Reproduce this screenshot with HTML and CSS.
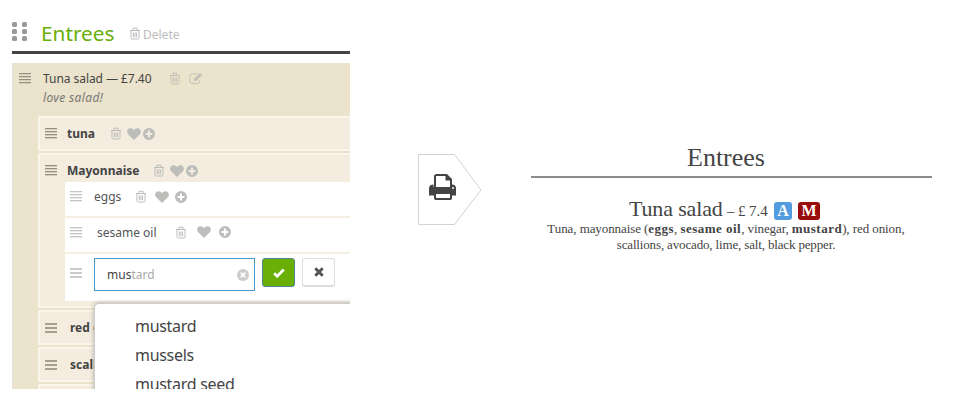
FILE: index.html
```html
<!DOCTYPE html>
<html lang="en">
<head>
<meta charset="utf-8">
<title>Menu editor</title>
<link rel="stylesheet" href="styles.css">
</head>
<body>
<svg class="defs" width="0" height="0" aria-hidden="true">
  <symbol id="trash" viewBox="0 0 12 13"><path d="M1 3.5h10M4 3.3V1.2h4v2.1M2 3.7v7.1q0 1.2 1.2 1.2h5.6q1.2 0 1.2-1.2V3.7M4.4 5.5v4.7M6 5.5v4.7M7.6 5.5v4.7" fill="none" stroke="currentColor" stroke-width="1"/></symbol>
  <symbol id="heart" viewBox="0 0 14 12"><path d="M7 12 1.2 6.3C-.7 4.2 0 .5 3.4.3 5 .2 6.3 1.2 7 2.3 7.7 1.2 9 .2 10.6.3c3.4.2 4.1 3.9 2.2 6z" fill="currentColor"/></symbol>
  <symbol id="plus" viewBox="0 0 12 12"><path fill-rule="evenodd" fill="currentColor" d="M6 0a6 6 0 1 1 0 12A6 6 0 0 1 6 0zM5 2.6V5H2.6v2H5v2.4h2V7h2.4V5H7V2.6z"/></symbol>
  <symbol id="edit" viewBox="0 0 14 13"><path d="M8.4 1.8H2.7Q1 1.8 1 3.5v6.2q0 1.7 1.7 1.7H9q1.7 0 1.7-1.7V8" fill="none" stroke="currentColor"/><path d="M5.2 6.500 11 .7l2.3 2.2-5.8 5.900-2.700.5z" fill="currentColor"/></symbol>
</svg>
<main class="page">
  <section class="editor">
    <header class="head">
      <div class="grip"><i></i><i></i><i></i><i></i><i></i><i></i></div>
      <h1>Entrees</h1>
      <svg class="trash"><use href="#trash"/></svg><span class="delete">Delete</span>
    </header>
    <div class="dish">
      <div class="dish-row">
        <i class="bars"></i><span class="dish-name">Tuna salad — £7.40</span>
        <svg class="trash"><use href="#trash"/></svg><svg class="edit"><use href="#edit"/></svg>
      </div>
      <p class="note">love salad!</p>
      <div class="list">
        <div class="card"><div class="row"><i class="bars"></i><b class="w-tuna">tuna</b>
          <svg class="trash"><use href="#trash"/></svg><svg class="heart"><use href="#heart"/></svg><svg class="plus"><use href="#plus"/></svg></div></div>
        <div class="card open"><div class="row"><i class="bars"></i><b class="w-mayo">Mayonnaise</b>
          <svg class="trash"><use href="#trash"/></svg><svg class="heart"><use href="#heart"/></svg><svg class="plus"><use href="#plus"/></svg></div>
          <div class="parts">
            <div class="part first"><i class="bars"></i><span class="w-eggs">eggs</span>
              <svg class="trash"><use href="#trash"/></svg><svg class="heart"><use href="#heart"/></svg><svg class="plus"><use href="#plus"/></svg></div>
            <div class="part second"><i class="bars"></i><span class="w-sesame">sesame oil</span>
              <svg class="trash"><use href="#trash"/></svg><svg class="heart"><use href="#heart"/></svg><svg class="plus"><use href="#plus"/></svg></div>
            <div class="part entry"><i class="bars"></i>
              <div class="field"><span>mus<em>tard</em></span><svg class="clear" viewBox="0 0 12 12"><circle cx="6" cy="6" r="6" fill="#ccc"/><path d="m3.7 3.7 4.6 4.6m0-4.6L3.7 8.3" stroke="#fff" stroke-width="1.8"/></svg></div>
              <div class="btn ok"><svg width="12" height="10" viewBox="0 0 12 10"><path d="m1.2 5.2 3 3L10.8 1.4" fill="none" stroke="#fff" stroke-width="2.8"/></svg></div>
              <div class="btn no"><svg width="10" height="10" viewBox="0 0 10 10"><path d="m1.3 1.3 7.4 7.4m0-7.4L1.3 8.7" stroke="#555" stroke-width="3"/></svg></div>
            </div>
          </div>
        </div>
        <div class="card low"><div class="row"><i class="bars"></i><b>red onion</b></div></div>
        <div class="card low"><div class="row"><i class="bars"></i><b>scallions</b></div></div>
        <div class="card low"></div>
      </div>
    </div>
    <div class="menu"><div>mustard</div><div>mussels</div><div>mustard seed</div></div>
  </section>
  <svg class="arrow" viewBox="0 0 64 72">
    <path d="M.5.5h36L63 36 36.5 70.5H.5z" fill="#fff" stroke="#d2d2d2"/>
    <path d="M17 35V22.500q0-1.500 1.500-1.500H28.500l4.500 4.500V35" fill="#fff" stroke="#444" stroke-width="2"/>
    <path d="M27.500 20.500v6H34z" fill="#444"/>
    <path d="M14 33h1.500v-2.500q-4.500 0-4.500 4V41.500h27v-7q0-4-4-4V33z" fill="#444"/>
    <path d="M12 33.500h25v6H12z" fill="#444"/>
    <rect x="17" y="39" width="16" height="6" rx=".7" fill="#fff" stroke="#444" stroke-width="2"/>
    <circle cx="35" cy="34" r="1" fill="#fff"/>
  </svg>
  <section class="print">
    <h2>Entrees</h2>
    <h3><span class="title">Tuna salad</span><span class="price">– £ 7.4</span><span class="tag a">A</span><span class="tag m">M</span></h3>
    <p class="l1">Tuna, mayonnaise (<b>eggs</b>, <b>sesame oil</b>, vinegar, <b>mustard</b>), red onion,</p>
    <p class="l2">scallions, avocado, lime, salt, black pepper.</p>
  </section>
</main>
</body>
</html>
```
FILE: styles.css
```css
* { box-sizing: border-box; }
body { margin: 0; background: #fff; color: #444; font-family: "Noto Sans", sans-serif; font-size: 12px; }
h1, h2, h3, p { margin: 0; font-weight: 400; }
svg { display: block; flex: none; }
.defs { position: absolute; }
.page { display: flex; align-items: flex-start; width: 953px; height: 418px; overflow: hidden; }
.editor { position: relative; width: 338px; height: 369px; margin: 20px 0 0 12px; overflow: hidden; flex: none; }
.head { display: flex; align-items: center; height: 34px; border-bottom: 3px solid #444; padding-bottom: 5px; color: #bbb; }
.grip { display: grid; grid-template-columns: 5px 5px; gap: 2px 5px; width: 15px; margin: 0 14px 3px 0; }
.grip i { height: 5px; border-radius: 1.5px; background: #999; }
h1 { width: 88px; color: #6aae08; font-size: 20.8px; line-height: 24px; white-space: nowrap; }
.trash { width: 12px; height: 13px; }
.heart { width: 14px; height: 12px; }
.plus { width: 12px; height: 12px; }
.edit { width: 14px; height: 13px; margin-left: 8px; }
.delete { margin-left: 2px; padding-top: 3px; }
.bars { display: block; width: 12px; height: 11px; flex: none; background: repeating-linear-gradient(#968f7f 0 1px, #d5cdb9 1px 2px, transparent 2px 3px); }
.dish { height: 340px; margin-top: 9px; padding-top: 5px; background: #ebe3cb; border-left: 1px solid #e2e1dc; }
.dish-row { display: flex; align-items: center; height: 20px; padding-left: 6px; color: #c4c1b8; }
.dish-name { width: 126px; margin-left: 12px; color: #444; white-space: nowrap; letter-spacing: -.05px; }
.note { padding-left: 30px; height: 18px; line-height: 20px; font-style: italic; color: #777; letter-spacing: .35px; }
.list { display: flex; flex-direction: column; gap: 2px; margin: 10px 0 0 25px; }
.card { height: 35px; flex: none; background: #f3ecdf; border: 2px solid #faf6ec; border-right: 0; border-radius: 2px 0 0 2px; }
.card.open { height: 155px; }
.row { display: flex; align-items: center; height: 31px; padding-left: 5px; color: #bdbdbb; }
.row b { margin-left: 10px; color: #444; white-space: nowrap; }
.open .row { height: 27px; padding-top: 4px; }
.row .heart { margin-left: 5px; }
.row .plus { margin-left: 2px; }
.low b { margin-left: 13px; }
.low .bars { background: repeating-linear-gradient(#a59f91 0 2px, transparent 2px 4px); height: 10px; }
.w-tuna { width: 43px; }
.w-mayo { width: 86px; }
.parts { height: 119px; margin-left: 25px; background: #fff; }
.part { display: flex; align-items: center; height: 36px; padding-left: 5px; border-bottom: 2px solid #f5efe2; color: #bdbdbb; }
.part.first { height: 36px; padding-bottom: 5px; }
.part.second { padding-bottom: 6px; }
.part .bars { background: repeating-linear-gradient(#c4c4c4 0 1px, #ececec 1px 2px, transparent 2px 3px); }
.part > span { color: #555; white-space: nowrap; }
.w-eggs { width: 41px; margin-left: 12px; }
.w-sesame { width: 78px; margin-left: 15px; }
.part .heart { margin-left: 8px; }
.part .plus { margin-left: 6px; }
.w-sesame ~ .heart { margin-left: 10px; }
.w-sesame ~ .plus { margin-left: 8px; }
.entry { height: 47px; border: 0; align-items: flex-start; padding-top: 4px; }
.entry .bars { margin-top: 10px; height: 10px; background: repeating-linear-gradient(#ccc 0 2px, transparent 2px 4px); }
.field { display: flex; align-items: center; justify-content: space-between; width: 161px; height: 33px; margin-left: 12px; padding: 0 5px 0 12px; border: 1px solid #4a95cc; color: #444; }
.field em { color: #aaa; font-style: normal; }
.clear { width: 12px; height: 12px; }
.btn { display: flex; align-items: center; justify-content: center; width: 33px; height: 29px; margin-left: 7px; border-radius: 3px; }
.ok { background: #6aae08; border: 1px solid #4f8796; }
.no { border: 1px solid #ddd; border-bottom: 2px solid #ddd; background: #fff; }
.menu { position: absolute; left: 82px; top: 283px; width: 270px; height: 100px; padding: 8px 0 0 40px; background: #fff; border: 1px solid #ccc; border-radius: 5px 0 0 0; box-shadow: 0 0 5px #0004; font-size: 16px; line-height: 29px; letter-spacing: -.3px; }
.arrow { width: 64px; height: 72px; margin: 154px 0 0 68px; }
.print { display: flex; flex-direction: column; align-items: center; width: 401px; margin: 142px 0 0 49px; font-family: "Liberation Serif", serif; }
h2 { width: 100%; height: 36px; border-bottom: 2px solid #8c8c8c; text-align: center; font-size: 26px; line-height: 31px; padding-right: 11px; }
h3 { display: flex; align-items: baseline; margin: 18px 14px 0 0; height: 25px; line-height: 25px; white-space: nowrap; }
.title { font-size: 22px; width: 98px; letter-spacing: -.15px; }
.price { font-size: 15px; width: 47px; letter-spacing: -.1px; }
.tag { width: 18px; height: 18px; border-radius: 3px; color: #fff; font-weight: bold; font-size: 16px; line-height: 18px; text-align: center; }
.a { background: #539bdf; }
.m { width: 22px; margin-left: 6px; background: #990c0c; }
.print p { font-size: 13px; line-height: 16px; white-space: nowrap; margin-right: 11px; }
.print .l1 { letter-spacing: -.08px; }
.l1 b { letter-spacing: .48px; }
.print .l2 { letter-spacing: -.15px; }
```
